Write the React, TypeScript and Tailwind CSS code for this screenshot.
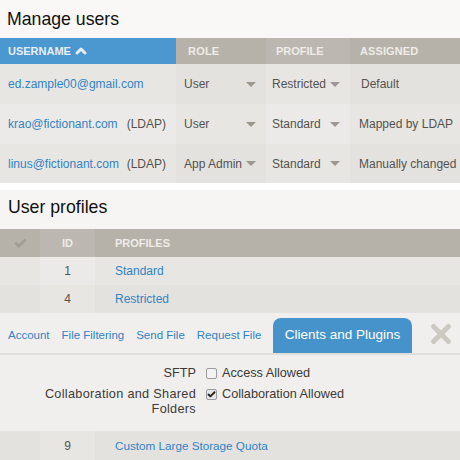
import { Check, ChevronUp, X } from "lucide-react";

const users = [
  { name: "ed.zample00@gmail.com", ldap: false, role: "User", profile: "Restricted", assigned: "Default", odd: false, rowH: "h-[40px]", assignedPl: "pl-[11px]" },
  { name: "krao@fictionant.com", ldap: true, role: "User", profile: "Standard", assigned: "Mapped by LDAP", odd: true, rowH: "h-[40px]", assignedPl: "pl-[9px]" },
  { name: "linus@fictionant.com", ldap: true, role: "App Admin", profile: "Standard", assigned: "Manually changed", odd: false, rowH: "h-[39px]", assignedPl: "pl-[9px]" },
];

function Caret() {
  return <span className="h-0 w-0 border-x-[5px] border-t-[5px] border-x-transparent border-t-[#9c978f]" />;
}

export default function App() {
  return (
    <div className="w-[460px] h-[460px] overflow-hidden bg-white font-['Liberation_Sans',Arial,sans-serif] text-[12px] text-[#55524e]">
      <div className="h-[38px] bg-[#f9f8f6] pl-[7px] pt-[8px] text-[17.7px] leading-[22px] text-[#111]">Manage users</div>

      {/* users table */}
      <div className="grid grid-cols-[176px_90px_84px_110px]">
        <div className="flex h-[26px] items-center bg-[#4b97d0] pl-[8px] text-[11px] font-bold text-[#e8eef3]">
          USERNAME <ChevronUp className="ml-[2px] h-[16px] w-[16px]" strokeWidth={4.5} />
        </div>
        <div className="flex items-center bg-[#b6b2aa] pl-[12px] text-[11px] font-bold tracking-[0.2px] text-[#eeece8]">ROLE</div>
        <div className="flex items-center bg-[#bcb8b1] pl-[10px] text-[11px] font-bold text-[#eeece8]">PROFILE</div>
        <div className="flex items-center bg-[#b6b2aa] pl-[10px] text-[11px] font-bold tracking-[0.1px] text-[#eeece8]">ASSIGNED</div>

        {users.map((u) => (
          <div key={u.name} className="contents">
            <div className={`flex items-center justify-between pl-[8px] pr-[10px] ${u.rowH} ${u.odd ? "bg-[#eceae8]" : "bg-[#e8e6e3]"}`}>
              <span className="text-[#3283c4]">{u.name}</span>
              {u.ldap && <span>(LDAP)</span>}
            </div>
            <div className={`flex items-center justify-between pl-[8px] pr-[10px] ${u.odd ? "bg-[#e8e6e3]" : "bg-[#e4e2df]"}`}>
              <span>{u.role}</span>
              <Caret />
            </div>
            <div className={`flex items-center justify-between pl-[6px] pr-[10px] ${u.odd ? "bg-[#eceae8]" : "bg-[#e8e6e3]"}`}>
              <span>{u.profile}</span>
              <Caret />
            </div>
            <div className={`flex items-center whitespace-nowrap ${u.assignedPl} ${u.odd ? "bg-[#e8e6e3]" : "bg-[#e4e2df]"}`}>{u.assigned}</div>
          </div>
        ))}
      </div>

      <div className="mt-[7px] h-[39px] bg-[#f7f5f3] pl-[8px] pt-[6px] text-[17.7px] leading-[22px] text-[#111]">User profiles</div>

      {/* profiles table */}
      <div className="grid grid-cols-[40px_55px_365px]">
        <div className="flex h-[28px] items-center justify-center bg-[#b6b2aa]">
          <Check className="h-[13px] w-[13px] text-[#a19d95]" strokeWidth={5} />
        </div>
        <div className="flex items-center justify-center bg-[#bcb8b1] text-[11px] font-bold text-[#eeece8]">ID</div>
        <div className="flex items-center bg-[#b6b2aa] pl-[20px] text-[11px] font-bold text-[#eeece8]">PROFILES</div>

        <div className="h-[28px] bg-[#e8e6e3]" />
        <div className="flex items-center justify-center bg-[#eceae8]">1</div>
        <div className="flex items-center bg-[#e8e6e3] pl-[20px] text-[#3283c4]">Standard</div>

        <div className="h-[28px] bg-[#e4e2df]" />
        <div className="flex items-center justify-center bg-[#e8e6e3]">4</div>
        <div className="flex items-center bg-[#e4e2df] pl-[20px] text-[#3283c4]">Restricted</div>
      </div>

      {/* tabs */}
      <div className="bg-[#f1efed]">
        <div className="flex h-[42px] items-end border-b-2 border-[#e0dedb] pl-[8px] pr-[4px]">
          <div className="flex h-[35px] w-[255px] items-center gap-[12px] whitespace-nowrap text-[11.5px] text-[#3283c4]">
            <span>Account</span>
            <span>File Filtering</span>
            <span>Send File</span>
            <span>Request File</span>
          </div>
          <div className="ml-[10px] flex h-[35px] w-[139px] items-center justify-center rounded-t-[8px] bg-[#4693cc] text-[13.5px] text-white">
            Clients and Plugins
          </div>
          <X className="mb-[4px] ml-auto h-[30px] w-[30px] text-[#cbc9c1]" strokeWidth={4} />
        </div>

        <div className="grid h-[76px] grid-cols-[196px_1fr] content-start gap-x-[10px] gap-y-[6px] pt-[11px] text-[12.7px] leading-[15px] text-[#3c3a38]">
          <div className="text-right">SFTP</div>
          <label className="flex items-center gap-[5px]">
            <span className="h-[11px] w-[11px] rounded-[2px] border border-[#9b9b9b] bg-[#f4f4f4]" />
            Access Allowed
          </label>
          <div className="pl-[40px] text-right tracking-[0.3px]">Collaboration and Shared Folders</div>
          <label className="flex items-start gap-[5px]">
            <span className="mt-[2px] flex h-[11px] w-[11px] items-center justify-center rounded-[2px] border border-[#9b9b9b] bg-[#e6e6e6]">
              <Check className="h-[9px] w-[9px] text-[#222]" strokeWidth={5} />
            </span>
            Collaboration Allowed
          </label>
        </div>
      </div>

      <div className="grid grid-cols-[40px_55px_365px]">
        <div className="h-[29px] bg-[#e4e2df]" />
        <div className="flex items-center justify-center bg-[#e8e6e3]">9</div>
        <div className="flex items-center bg-[#e4e2df] pl-[20px] text-[11.7px] text-[#3283c4]">Custom Large Storage Quota</div>
      </div>
    </div>
  );
}
